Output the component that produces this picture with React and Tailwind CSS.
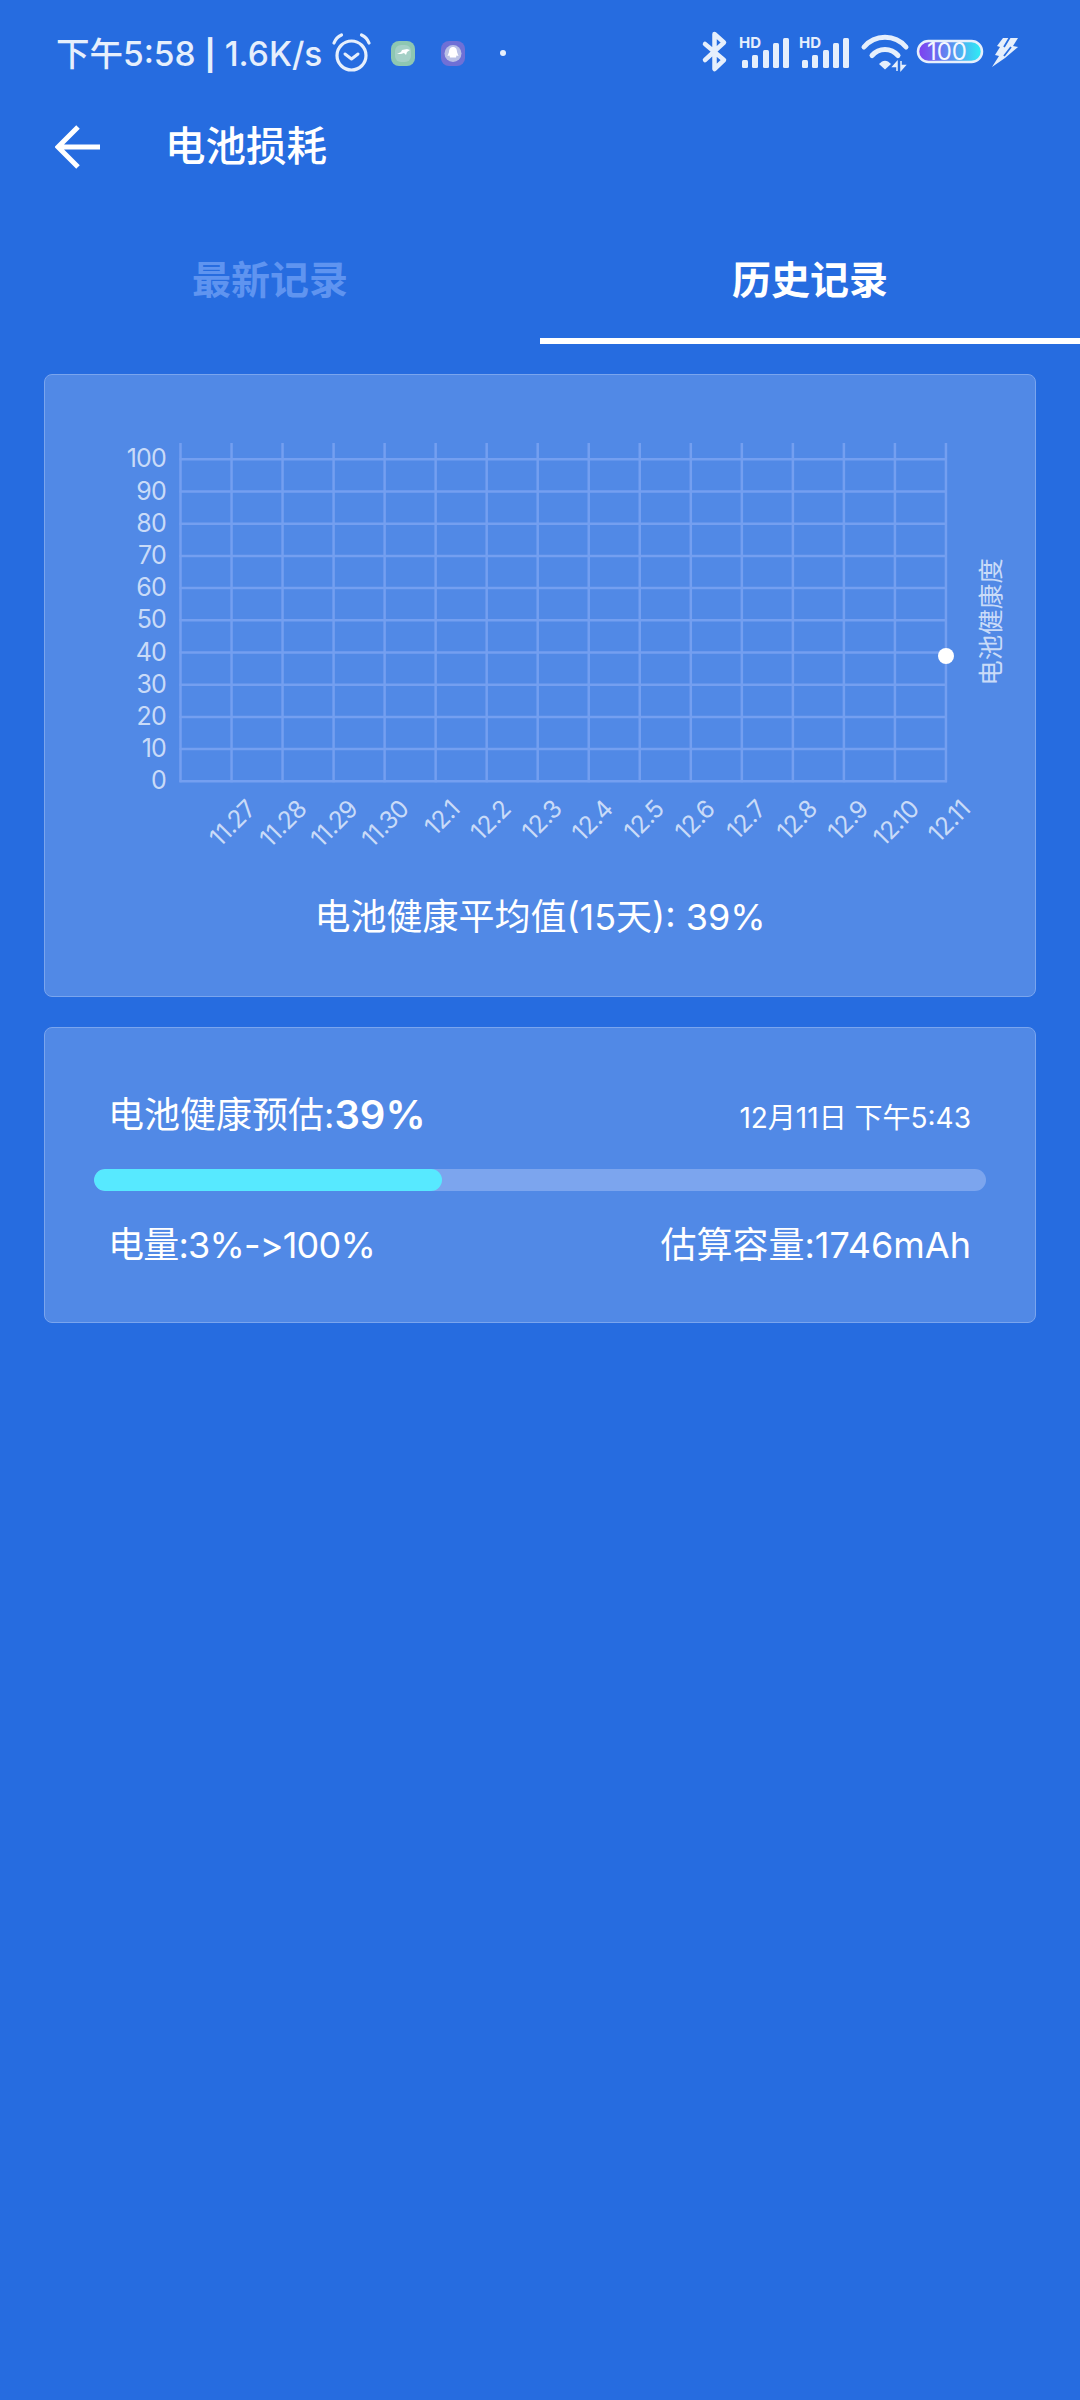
import React from "react";

const FONT = "font-['Inter','Noto_Sans_CJK_SC',sans-serif]";
const CJK = "Inter, 'Noto Sans CJK SC', sans-serif";

function Bars({ x }) {
  const bars = [[0, 60], [10, 55], [21, 50], [31, 43], [41, 38]];
  return (
    <g fill="#e6effc">
      <text x={x - 3} y="47.500" fontSize="15" fontWeight="700" fontFamily="Inter, sans-serif">HD</text>
      {bars.map(([dx, top]) => (
        <rect key={dx} x={x + dx} y={top} width="6" height={68 - top} rx="1.500" />
      ))}
    </g>
  );
}

function LeftIcons() {
  return (
    <svg width="190" height="60" viewBox="330 25 190 60" className="block shrink-0">
      <g fill="none" stroke="#e6effc" strokeLinecap="round">
        <circle cx="350.500" cy="55.500" r="14.500" strokeWidth="3.200" />
        <path d="M344 54l6.500 5 6.500-5" strokeWidth="3" strokeLinejoin="round" />
        <path d="M333 43c1.500-4 4-6.500 7.500-8" strokeWidth="3.200" />
        <path d="M368 43c-1.500-4-4-6.500-7.500-8" strokeWidth="3.200" />
      </g>
      <rect x="390" y="41" width="24" height="25" rx="8" fill="#8ec7b2" />
      <rect x="394" y="45" width="16" height="17" rx="6" fill="#a5d0c6" />
      <path d="M396 54l4-2 1-2 5-1 3 1-3 2-1 3-2-2-3 1z" fill="#ffffff" />
      <rect x="440" y="41" width="24" height="25" rx="8" fill="#6f70d6" />
      <circle cx="452" cy="53.500" r="8.500" fill="#b9c0e6" />
      <path d="M452 47c3 0 4 2.500 4 5l1.500 4-2-.5-.5 2h-6l-.5-2-2 .5 1.500-4c0-2.500 1-5 4-5z" fill="#ffffff" />
      <circle cx="502" cy="53" r="3" fill="#e6effc" />
    </svg>
  );
}

function RightIcons() {
  return (
    <svg width="330" height="60" viewBox="695 25 330 60" className="block shrink-0">
      <defs>
        <linearGradient id="batt" x1="0" x2="1" y1="0" y2="0">
          <stop offset="0" stopColor="#7f3df0" />
          <stop offset="0.5" stopColor="#5d8df0" />
          <stop offset="1" stopColor="#2ef0f5" />
        </linearGradient>
      </defs>
      <path d="M705 44l19 16-9.500 9V34l9.500 8.500L705 60" fill="none" stroke="#e6effc" strokeWidth="4.500" strokeLinecap="round" strokeLinejoin="round" />
      <Bars x={742} />
      <Bars x={802} />
      <g fill="none" stroke="#e6effc" strokeWidth="5" strokeLinecap="round">
        <path d="M864 47c11-13 31-13 42 0" />
        <path d="M872 55.500c7-8 19-8 26 0" />
      </g>
      <path d="M879 64c4-4.500 8-4.500 12 0l-6 5.500z" fill="#e6effc" />
      <path d="M897 71v-9l-4 4.500h4zM901 61v9l4-4.500h-4z" fill="#e6effc" stroke="#e6effc" strokeWidth="1.500" />
      <rect x="918" y="41" width="64" height="21" rx="10.500" fill="url(#batt)" stroke="#e6effc" strokeWidth="2.500" />
      <text x="947" y="60" textAnchor="middle" fontSize="24" fontFamily="Inter, sans-serif" fill="#f4f8ff">100</text>
      <path d="M1003 38L1018 38L1013 46L1018 47L1005 58L992 67L999 56L995 55L1000 47L997 46Z" fill="#e6effc" />
      <path d="M1010 37L1004 47M1011 47L1004 56" stroke="#266ce0" strokeWidth="1.800" />
    </svg>
  );
}

function Chart() {
  const x0 = 180.5;
  const step = 51.03;
  const yTop = 459.3;
  const yStep = 32.2;
  const ys = Array.from({ length: 11 }, (_, i) => i * 10);
  const xl = ["11.27", "11.28", "11.29", "11.30", "12.1", "12.2", "12.3", "12.4", "12.5", "12.6", "12.7", "12.8", "12.9", "12.10", "12.11"];
  const yb = yTop + 10 * yStep;
  return (
    <svg viewBox="45 430 990 414" width="990" height="414" className="block overflow-visible" style={{ fontFamily: CJK }}>
      <g stroke="#749ff0" strokeWidth="2.500">
        {Array.from({ length: 16 }, (_, i) => (
          <line key={i} x1={x0 + i * step} x2={x0 + i * step} y1="443" y2={yb + 1} />
        ))}
        {ys.map((v, i) => (
          <line key={v} x1={x0 - 1} x2={x0 + 15 * step + 1} y1={yTop + i * yStep} y2={yTop + i * yStep} />
        ))}
      </g>
      <g fill="#c9dbf8" fontSize="25" textAnchor="end" letterSpacing="-0.8">
        {ys.slice().reverse().map((v, i) => (
          <text key={v} x="166" y={yTop + i * yStep + 8}>{v}</text>
        ))}
      </g>
      <g fill="#c9dbf8" fontSize="24.500" textAnchor="end" letterSpacing="-0.6">
        {xl.map((t, i) => {
          const x = x0 + (i + 1) * step + 12;
          const y = 797;
          return <text key={t} x={x} y={y} transform={`rotate(-45 ${x} ${y})`} dominantBaseline="hanging">{t}</text>;
        })}
      </g>
      <circle cx="946" cy="656" r="8" fill="#ffffff" />
      <text x="1000" y="622" fill="#c9dbf8" fontSize="25.500" textAnchor="middle" transform="rotate(-90 1000 622)">电池健康度</text>
    </svg>
  );
}

export default function App() {
  return (
    <div className={`w-[1080px] h-[2400px] bg-[#266ce0] text-white overflow-hidden ${FONT}`}>
      <div className="h-[103px] flex items-center justify-between pl-[56px] pr-[55px] pt-[7px]">
        <div className="flex items-center">
          <span className="text-[33.500px] leading-[40px] font-medium text-[#e6effc] w-[275px] whitespace-nowrap -mt-[2px]">下午5:58 <span className="text-[30px] font-bold">|</span> 1.6K/s</span>
          <LeftIcons />
        </div>
        <RightIcons />
      </div>
      <div className="h-[87px] flex items-center pl-[55px]">
        <svg width="46" height="46" viewBox="0 0 46 46" fill="none" stroke="#ffffff" strokeWidth="5" className="block shrink-0">
          <path d="M45 23H4M23 3L3 23l20 20" />
        </svg>
        <span className="ml-[64px] text-[40.500px] font-medium leading-[48px]">电池损耗</span>
      </div>
      <div className="h-[154px] flex">
        <div className="w-1/2 flex items-center justify-center pt-[32px] pb-[6px] text-[39px] font-bold text-[#5f94f0]">最新记录</div>
        <div className="w-1/2 flex items-center justify-center pt-[32px] text-[39px] font-bold border-b-[6px] border-white">历史记录</div>
      </div>
      <div className="mx-[44px] mt-[30px] h-[623px] rounded-[8px] border border-[#7aa5ee] bg-[#5189e6] pt-[55px] flex flex-col items-center">
        <Chart />
        <div className="mt-[53px] text-[36px] leading-[40px] whitespace-nowrap">电池健康平均值(15天): 39%</div>
      </div>
      <div className="mx-[44px] mt-[30px] h-[296px] rounded-[8px] border border-[#7aa5ee] bg-[#5189e6] px-[49px] pt-[61px]">
        <div className="flex items-center justify-between pl-[14px] pr-[15px] h-[52px]">
          <div className="flex items-center text-[36px] whitespace-nowrap">电池健康预估:<span className="text-[40px] font-semibold">39%</span></div>
          <div className="text-[28px] whitespace-nowrap pt-[6px]">12月11日 下午5:43</div>
        </div>
        <div className="mt-[28px] h-[22px] rounded-full bg-[#7ca5ee] overflow-hidden">
          <div className="h-full rounded-full bg-[#57e9ff]" style={{ width: "39%" }} />
        </div>
        <div className="mt-[31px] flex items-center justify-between pl-[14px] pr-[15px] h-[46px] text-[36px] whitespace-nowrap [font-feature-settings:'calt'_0]">
          <span className="tracking-[-0.8px]">电量:3%-&gt;100%</span>
          <span>估算容量:1746mAh</span>
        </div>
      </div>
    </div>
  );
}
